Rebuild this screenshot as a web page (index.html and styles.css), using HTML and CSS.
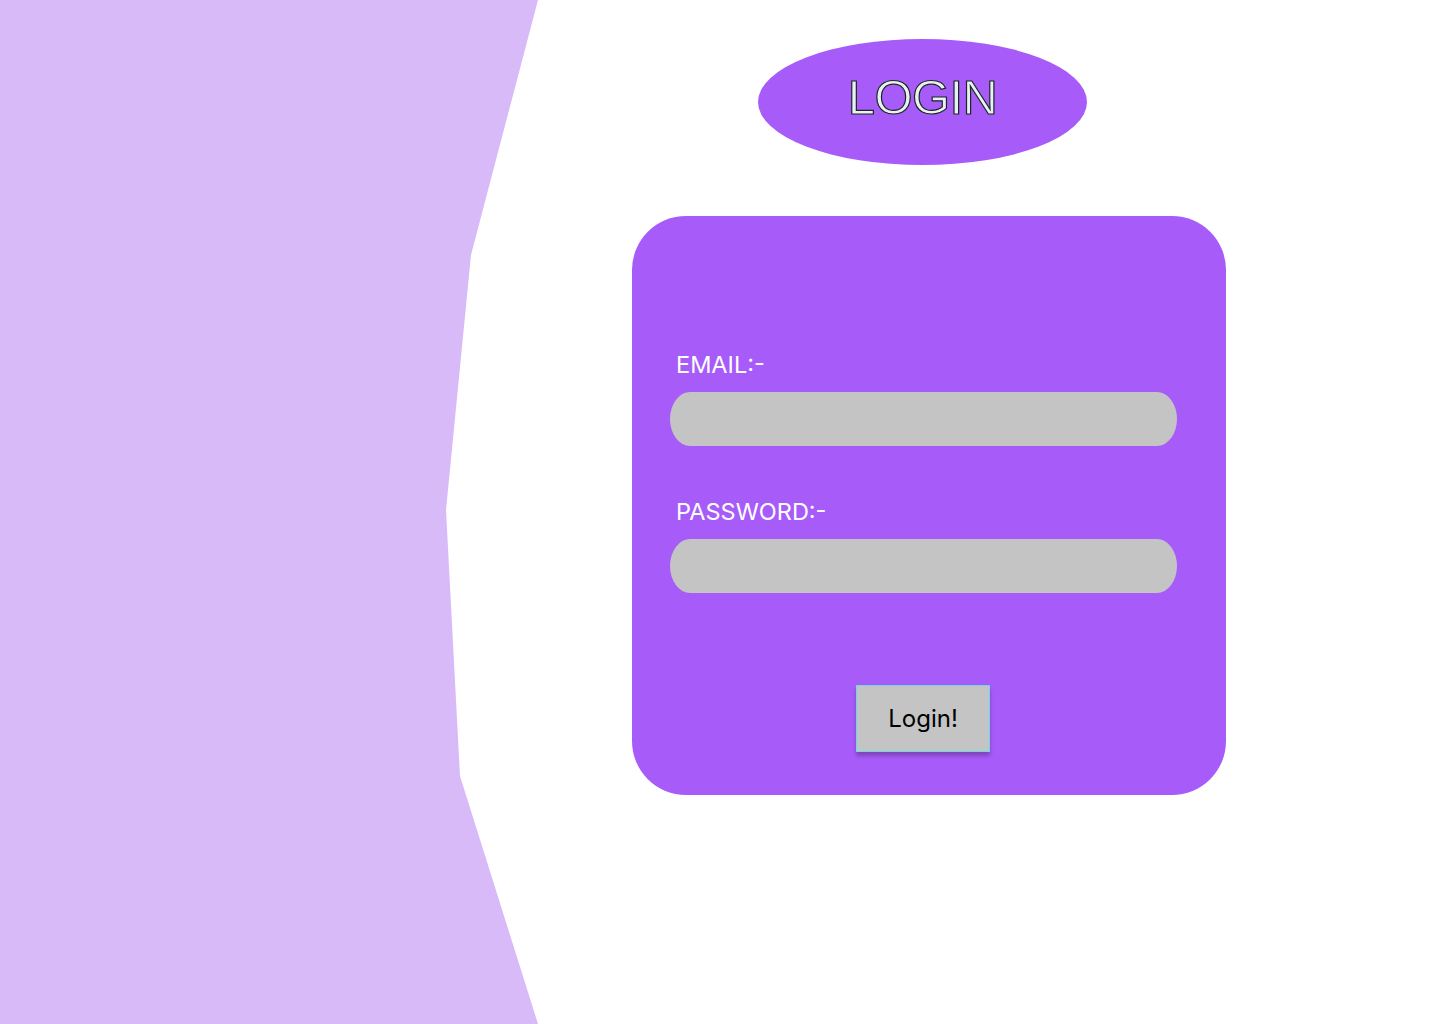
FILE: index.html
```html
<!DOCTYPE html>
<html lang="en">
<head>
<meta charset="utf-8">
<title>Login</title>
<link rel="stylesheet" href="styles.css">
</head>
<body>
<div class="page">
  <aside class="side">
    <svg class="side-shape" width="538" height="1024" viewBox="0 0 538 1024" aria-hidden="true">
      <polygon points="0,0 538,0 471,255 446,510 460,776 538,1024 0,1024" fill="#D9BAF8"/>
    </svg>
  </aside>
  <main class="main">
    <div class="title-badge"><h1 class="title">LOGIN</h1></div>
    <form class="card">
      <label class="field-label" for="email">EMAIL:-</label>
      <input class="field" id="email" type="email">
      <label class="field-label second" for="password">PASSWORD:-</label>
      <input class="field" id="password" type="password">
      <div class="actions">
        <button class="btn" type="button">Login!</button>
      </div>
    </form>
  </main>
</div>
</body>
</html>
```
FILE: styles.css
```css
html, body {
  margin: 0;
  padding: 0;
  background: #ffffff;
}
body {
  font-family: Inter, "Noto Sans", sans-serif;
}
.page {
  display: flex;
  width: 1440px;
  height: 1024px;
  overflow: hidden;
}
.side {
  flex: 0 0 538px;
  height: 1024px;
}
.side-shape {
  display: block;
}
.main {
  flex: 1;
  display: flex;
  flex-direction: column;
  align-items: flex-start;
}
.title-badge {
  margin-top: 39px;
  margin-left: 220px;
  width: 329px;
  height: 126px;
  border-radius: 50%;
  background: #A75CFA;
  display: flex;
  align-items: center;
  justify-content: center;
  box-sizing: border-box;
  padding-bottom: 10px;
}
.title {
  margin: 0;
  font-family: "Liberation Sans", Arial, sans-serif;
  font-weight: 400;
  font-size: 49px;
  line-height: 1;
  color: #E4F4F2;
  -webkit-text-stroke: 1.2px #222222;
  letter-spacing: -0.6px;
}
.card {
  margin-top: 51px;
  margin-left: 94px;
  width: 594px;
  height: 579px;
  box-sizing: border-box;
  border-radius: 54px;
  background: #A75CFA;
  padding: 135px 49px 0 38px;
  display: flex;
  flex-direction: column;
}
.field-label {
  color: #ffffff;
  font-size: 23.5px;
  line-height: 27px;
  margin-left: 6px;
  margin-bottom: 14px;
}
.field-label.second {
  margin-top: 52px;
}
.field {
  display: block;
  width: 507px;
  height: 54px;
  box-sizing: border-box;
  border: none;
  border-radius: 20px / 27px;
  background: #C4C4C4;
  outline: none;
  padding: 0;
}
.actions {
  display: flex;
  justify-content: center;
  margin-top: 92px;
  padding-right: 1px;
}
.btn {
  width: 134px;
  height: 67px;
  box-sizing: border-box;
  background: #C4C4C4;
  border: 1px solid #6FD7E6;
  box-shadow: 0 4px 4px rgba(0, 0, 0, 0.25);
  font-family: Inter, "Noto Sans", sans-serif;
  font-size: 24px;
  color: #000000;
  padding: 0;
  cursor: pointer;
}
```
